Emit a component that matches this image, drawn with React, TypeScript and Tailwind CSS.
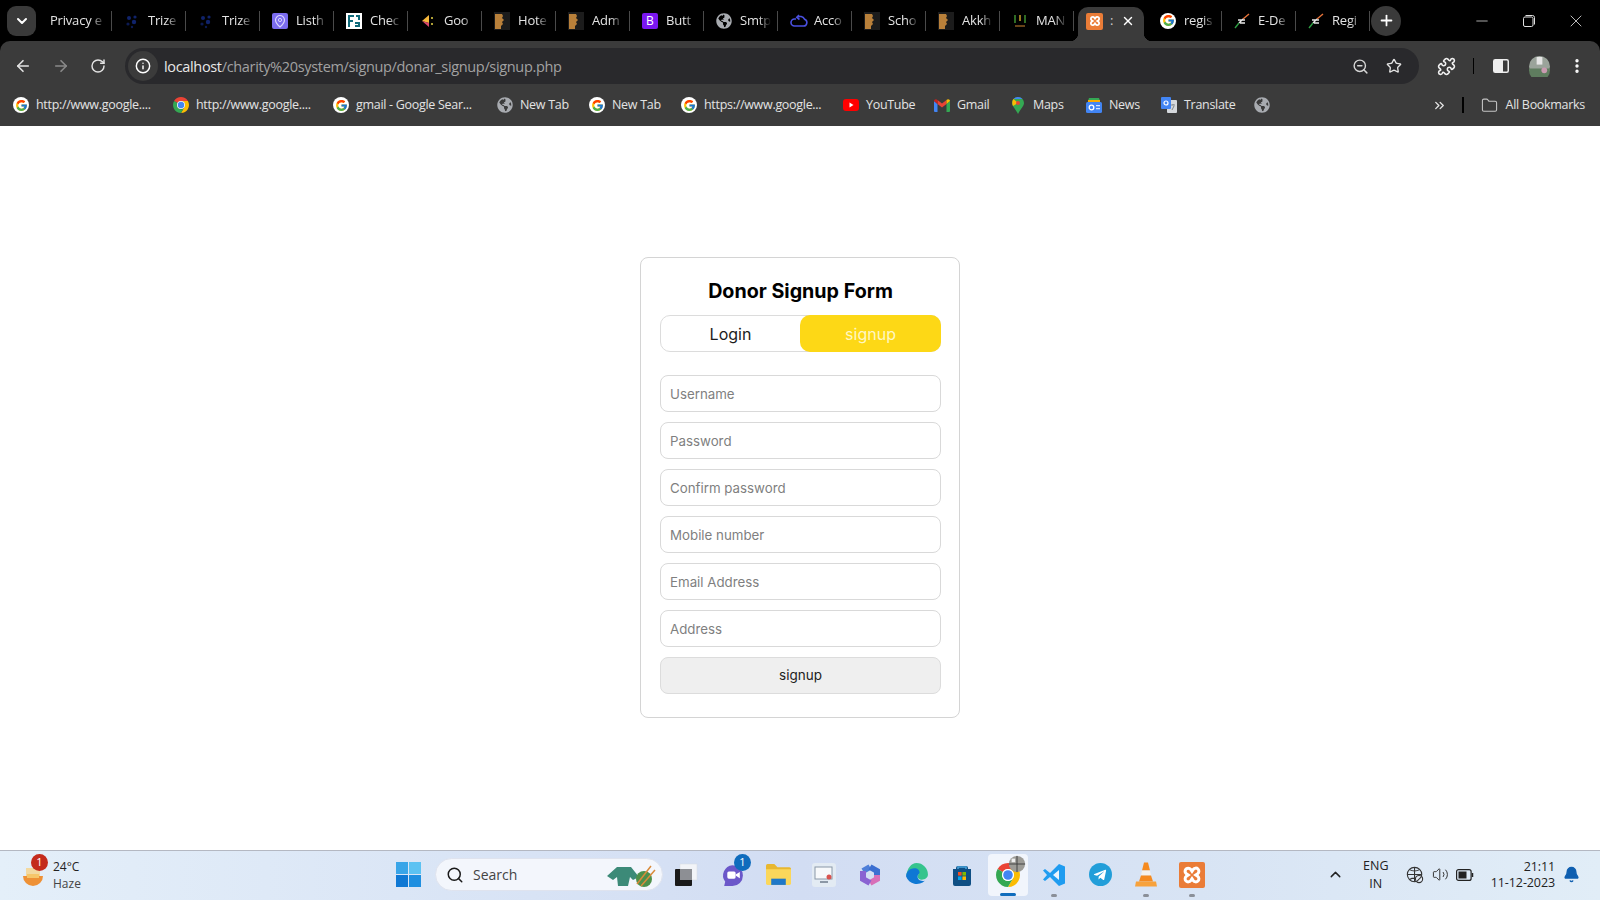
import type { ReactNode } from "react";
import {
  ArrowLeft,
  ArrowRight,
  Bell,
  ChevronDown,
  ChevronUp,
  ChevronsRight,
  EllipsisVertical,
  Folder,
  Info,
  Minus,
  Plus,
  Puzzle,
  RotateCw,
  Search,
  Star,
  Volume2,
  X,
  ZoomOut,
} from "lucide-react";
import { FcGoogle } from "react-icons/fc";
import { FaGlobeAmericas, FaTelegramPlane } from "react-icons/fa";

const Book = () => (
  <svg viewBox="0 0 16 18" className="h-[18px] w-[16px]">
    <rect width="16" height="18" fill="#1c1c1c" />
    <path d="M1 2h7l1 2-1 2 2 2-2 2 1 2-2 2 0 3H1z" fill="#b9803a" />
  </svg>
);

const TrizeIcon = () => (
  <svg viewBox="0 0 16 16" className="h-4 w-4">
    <circle cx="5" cy="5" r="2" fill="#10236b" />
    <circle cx="11" cy="4" r="1.6" fill="#10236b" />
    <circle cx="4" cy="11" r="1.6" fill="#0c1a52" />
    <circle cx="10" cy="9" r="2.2" fill="#10236b" />
    <circle cx="8" cy="14" r="1.2" fill="#0c1a52" />
  </svg>
);

const ListhIcon = () => (
  <svg viewBox="0 0 16 16" className="h-4 w-4">
    <rect width="16" height="16" rx="2" fill="#7b6cf0" />
    <path d="M8 2.5a4.5 4.5 0 0 0-4.5 4.5C3.500 10 8 14 8 14s4.500-4 4.500-7A4.500 4.500 0 0 0 8 2.500z" fill="none" stroke="#d9d4ff" strokeWidth="1.2" />
    <circle cx="8" cy="7" r="1.600" fill="none" stroke="#d9d4ff" />
  </svg>
);

const CheckIcon = () => (
  <svg viewBox="0 0 16 16" className="h-4 w-4">
    <rect width="16" height="16" fill="#fff" />
    <path d="M2 2h6v2H4v3h3v2H4v5H2zM10 2h4v5h-2V4h-2zM9 9h5v5H9v-2h3v-1H9z" fill="#0f6a7a" />
  </svg>
);

const GoodIcon = () => (
  <svg viewBox="0 0 16 16" className="h-4 w-4">
    <path d="M9 2 2 8l7 2z" fill="#f6b73c" />
    <path d="M2 8l7 6v-4z" fill="#d9466b" />
    <circle cx="12" cy="5" r="1" fill="#e8d548" />
    <circle cx="12" cy="11" r="1" fill="#e8d548" />
  </svg>
);

const BootstrapIcon = () => (
  <div className="flex h-4 w-4 items-center justify-center rounded-[2px] bg-[#7a16f0] text-[12px] leading-none text-white">B</div>
);

const CloudLoop = () => (
  <svg viewBox="0 0 18 16" className="h-4 w-[18px]" fill="none" stroke="#4a50e0" strokeWidth="1.600">
    <path d="M6 6H4.500a3.500 3.500 0 0 0 0 7h9a3.500 3.500 0 0 0 1-6.800A5 5 0 0 0 7 4.500" />
    <path d="M9 2 6.800 4.500 9.500 6.500" />
  </svg>
);

const ManIcon = () => (
  <svg viewBox="0 0 16 16" className="h-4 w-4" fill="none" strokeWidth="1.500">
    <path d="M3 2v8" stroke="#3f8f2f" />
    <path d="M8 2v6" stroke="#c9a227" />
    <path d="M13 2v8" stroke="#3f8f2f" />
    <path d="M3 13h10" stroke="#8a5a20" />
  </svg>
);

const Quill = () => (
  <svg viewBox="0 0 16 16" className="h-4 w-4" fill="none" strokeWidth="1.400">
    <path d="M15 1 9 6" stroke="#e8743a" />
    <path d="M9 6 5 10M4 7h7M6 10h5" stroke="#e8e8e8" />
    <path d="M5 10 1 15" stroke="#2f9e44" />
  </svg>
);

const Xampp = ({ box = "h-4 w-4", glyph = "h-3 w-3" }: { box?: string; glyph?: string }) => (
  <div className={`flex items-center justify-center rounded-[2px] bg-[#ea7c37] ${box}`}>
    <svg viewBox="0 0 16 16" className={glyph} fill="none" stroke="#fff" strokeWidth="2.400">
      <path d="M5 2.500a2.500 2.500 0 0 0-1.500 4.500L5 8l-1.500 1A2.500 2.500 0 1 0 7 12.500L8 11l1 1.500A2.500 2.500 0 1 0 12.500 9L11 8l1.500-1A2.500 2.500 0 1 0 9 3.500L8 5 7 3.500A2.500 2.500 0 0 0 5 2.500z" />
    </svg>
  </div>
);

const Chrome = ({ size = "h-4 w-4" }: { size?: string }) => (
  <svg viewBox="4 4 40 40" className={size}>
    <path d="M6.680 14A20 20 0 0 1 41.320 14H24A10 10 0 0 0 15.340 19Z" fill="#ea4335" />
    <path d="M41.320 14A20 20 0 0 1 24 44L32.660 29A10 10 0 0 0 24 14Z" fill="#fbbc04" />
    <path d="M6.680 14A20 20 0 0 0 24 44L32.660 29A10 10 0 0 1 15.340 19Z" fill="#34a853" />
    <circle cx="24" cy="24" r="10" fill="#fff" />
    <circle cx="24" cy="24" r="8" fill="#4285f4" />
  </svg>
);

const Globe = () => <FaGlobeAmericas className="h-4 w-4 text-[#a8abb0]" />;
const G = () => (
  <div className="flex h-4 w-4 items-center justify-center rounded-full bg-white">
    <FcGoogle className="h-[13px] w-[13px]" />
  </div>
);

const Youtube = () => (
  <svg viewBox="0 0 16 12" className="h-3 w-4">
    <rect width="16" height="12" rx="3" fill="#f00" />
    <path d="M6.500 3.500v5l4-2.500z" fill="#fff" />
  </svg>
);

const Gmail = () => (
  <svg viewBox="0 0 16 13" className="h-[13px] w-4">
    <path d="M0 2v10a1 1 0 0 0 1 1h2.500V5z" fill="#4285f4" />
    <path d="M16 2v10a1 1 0 0 1-1 1h-2.500V5z" fill="#34a853" />
    <path d="M12.500 1 8 4.500 3.500 1v4L8 8.500 12.500 5z" fill="#ea4335" />
    <path d="M0 2c0-1.500 2-2.500 3.500-1v4L0 2z" fill="#c5221f" />
    <path d="M16 2c0-1.500-2-2.500-3.500-1v4L16 2z" fill="#fbbc04" />
  </svg>
);

const MapsPin = () => (
  <svg viewBox="0 0 12 17" className="h-[17px] w-3">
    <path d="M6 0a6 6 0 0 1 6 6c0 3-3 5-6 11C3 11 0 9 0 6a6 6 0 0 1 6-6z" fill="#34a853" />
    <path d="M1.500 2 6 6 1 9C0 7-.2 4 1.500 2z" fill="#fbbc04" />
    <path d="M6 0a6 6 0 0 1 4.500 2L1.500 2A6 6 0 0 1 6 0z" fill="#4285f4" />
    <circle cx="6" cy="6" r="2" fill="#ea4335" />
  </svg>
);

const NewsIcon = () => (
  <svg viewBox="0 0 16 16" className="h-4 w-4">
    <path d="M2 4l1-3h10l1 3z" fill="#34a853" />
    <path d="M2 3h12v2H2z" fill="#f9ab00" />
    <rect y="5" width="16" height="11" rx="1.500" fill="#4285f4" />
    <path d="M10 8h4v1.300h-4zM10 11h4v1.300h-4z" fill="#d2e3fc" />
    <circle cx="5.500" cy="10.500" r="2.300" fill="none" stroke="#fff" strokeWidth="1.300" />
  </svg>
);

const TranslateIcon = () => (
  <svg viewBox="0 0 16 16" className="h-4 w-4">
    <rect x="6" y="3" width="10" height="13" rx="1" fill="#d5d8dc" />
    <rect width="10" height="12" rx="1" fill="#4285f4" />
    <circle cx="5" cy="6" r="2" fill="none" stroke="#fff" strokeWidth="1.200" />
    <path d="M10 8h4M12 7v1M11 13l2-4" stroke="#80868b" strokeWidth="1" />
  </svg>
);

const Divider = () => <div className="absolute right-0 top-[11px] h-[20px] w-[1.500px] bg-[#4a4a4a]" />;

const Tab = ({ icon, title }: { icon?: ReactNode; title: string }) => (
  <div className="relative flex h-[41px] w-[74px] shrink-0 items-center pl-[12px]">
    <div className="flex w-[24px] shrink-0 items-center">{icon}</div>
    <span className="w-[31px] overflow-hidden whitespace-nowrap text-[13px] tracking-[-0.2px] text-[#e3e3e3] [mask-image:linear-gradient(to_right,black_60%,transparent)]">
      {title}
    </span>
    <Divider />
  </div>
);

const tabs: { title: string; icon: ReactNode }[] = [
  { title: "Trize", icon: <TrizeIcon /> },
  { title: "Trize", icon: <TrizeIcon /> },
  { title: "Listh", icon: <ListhIcon /> },
  { title: "Chec", icon: <CheckIcon /> },
  { title: "Goo", icon: <GoodIcon /> },
  { title: "Hote", icon: <Book /> },
  { title: "Adm", icon: <Book /> },
  { title: "Butt", icon: <BootstrapIcon /> },
  { title: "Smtp", icon: <Globe /> },
  { title: "Acco", icon: <CloudLoop /> },
  { title: "Scho", icon: <Book /> },
  { title: "Akkh", icon: <Book /> },
  { title: "MAN", icon: <ManIcon /> },
];

const bookmarks = [
  { label: "http://www.google....", icon: <G />, gap: "mr-[21px]", text: "w-[116px]" },
  { label: "http://www.google....", icon: <Chrome />, gap: "mr-[21px]", text: "w-[116px]" },
  { label: "gmail - Google Sear...", icon: <G />, gap: "mr-[21px]", text: "w-[120px]" },
  { label: "New Tab", icon: <Globe />, gap: "mr-[21px]", text: "w-[48px]" },
  { label: "New Tab", icon: <G />, gap: "mr-[21px]", text: "w-[48px]" },
  { label: "https://www.google...", icon: <G />, gap: "mr-[22px]", text: "w-[117px]" },
  { label: "YouTube", icon: <Youtube />, gap: "mr-[20px]", text: "w-[48px]" },
  { label: "Gmail", icon: <Gmail />, gap: "mr-[21px]", text: "w-[32px]" },
  { label: "Maps", icon: <MapsPin />, gap: "mr-[23px]", text: "w-[30px]" },
  { label: "News", icon: <NewsIcon />, gap: "mr-[21px]", text: "w-[31px]" },
  { label: "Translate", icon: <TranslateIcon />, gap: "mr-[22px]", text: "w-[48px]" },
];

const TabStrip = () => (
  <div className="flex h-[41px] items-center bg-black pl-[7px]">
    <div className="mr-[2px] flex h-[30px] w-[29px] shrink-0 items-center justify-center rounded-[9px] bg-[#3a3a3a]">
      <ChevronDown className="h-4 w-4 text-white" strokeWidth={3} />
    </div>
    <div className="relative flex h-[41px] w-[74px] shrink-0 items-center pl-[12px]">
      <span className="w-[56px] overflow-hidden whitespace-nowrap text-[13px] tracking-[-0.2px] text-[#e3e3e3] [mask-image:linear-gradient(to_right,black_72%,transparent)]">
        Privacy e
      </span>
      <Divider />
    </div>
    {tabs.map((tab, i) => (
      <Tab key={i} icon={tab.icon} title={tab.title} />
    ))}
    <div className="relative mx-[4px] mt-[7px] flex h-[34px] w-[66px] shrink-0 items-center rounded-t-[10px] bg-[#3b3b3b] pb-[6px] pl-[8px]">
      <div className="absolute -left-[8px] bottom-0 h-2 w-2 bg-[radial-gradient(circle_at_0_0,#000_8px,#3b3b3b_8.5px)]" />
      <Xampp box="h-[17px] w-[17px]" />
      <span className="ml-[7px] text-[13px] text-[#d0d0d0]">:</span>
      <X className="ml-[8px] h-[14px] w-[14px] text-white" strokeWidth={2.5} />
      <div className="absolute -right-[8px] bottom-0 h-2 w-2 bg-[radial-gradient(circle_at_100%_0,#000_8px,#3b3b3b_8.5px)]" />
    </div>
    <Tab icon={<G />} title="regis" />
    <Tab icon={<Quill />} title="E-De" />
    <Tab icon={<Quill />} title="Regi" />
    <div className="ml-px flex h-[30px] w-[30px] shrink-0 items-center justify-center rounded-full bg-[#3a3a3a]">
      <Plus className="h-[17px] w-[17px] text-white" strokeWidth={2.5} />
    </div>
    <div className="ml-auto flex items-center pr-[1px]">
      <div className="flex w-[47px] justify-center">
        <Minus className="h-[18px] w-[18px] text-[#e0e0e0]" strokeWidth={1} />
      </div>
      <div className="flex w-[47px] justify-center">
        <svg viewBox="0 0 12 12" className="h-[12px] w-[12px]" fill="none" stroke="#e0e0e0">
          <rect x="0.500" y="2" width="9.500" height="9.500" rx="1.500" />
          <path d="M2.500 .500h7a2 2 0 0 1 2 2v7" />
        </svg>
      </div>
      <div className="flex w-[47px] justify-center">
        <X className="h-[20px] w-[20px] text-[#e0e0e0]" strokeWidth={1} />
      </div>
    </div>
  </div>
);

const Toolbar = () => (
  <div className="flex h-[43px] items-center rounded-t-[10px] bg-[#3b3b3b] pt-[7px]">
    <div className="flex w-[125px] shrink-0 items-center pl-[14px]">
      <ArrowLeft className="h-[18px] w-[18px] text-[#e3e3e3]" strokeWidth={2.2} />
      <ArrowRight className="ml-[20px] h-[18px] w-[18px] text-[#8a8a8a]" strokeWidth={2.2} />
      <RotateCw className="ml-[20px] h-[16px] w-[16px] text-[#e3e3e3]" strokeWidth={2.2} />
    </div>
    <div className="flex h-[36px] w-[1294px] shrink-0 items-center rounded-full bg-[#29292c] pl-[3px] pr-[17px]">
      <div className="flex h-[30px] w-[30px] items-center justify-center rounded-full bg-[#3b3b3b]">
        <Info className="h-[16px] w-[16px] text-white" strokeWidth={2.2} />
      </div>
      <div className="ml-[6px] whitespace-nowrap pt-[1px] font-['Open_Sans',sans-serif] text-[14.500px] tracking-[-0.34px] text-[#a2a2a2]">
        <span className="text-[#e8e8e8]">localhost</span>/charity%20system/signup/donar_signup/signup.php
      </div>
      <ZoomOut className="ml-auto h-[17px] w-[17px] text-[#d5d5d5]" strokeWidth={2} />
      <Star className="ml-[17px] h-[16px] w-[16px] text-[#e3e3e3]" strokeWidth={2} />
    </div>
    <div className="flex flex-1 items-center pl-[18px]">
      <Puzzle className="h-[19px] w-[19px] text-[#f0f0f0]" strokeWidth={2} />
      <div className="ml-[17px] h-[16px] w-px bg-black" />
      <svg viewBox="0 0 16 14" className="ml-[19px] h-[14px] w-[16px]">
        <rect x="0.750" y="0.750" width="14.500" height="12.500" rx="1.500" fill="none" stroke="#eee" strokeWidth="1.500" />
        <rect x="1" y="1" width="9" height="12" fill="#eee" />
      </svg>
      <svg viewBox="0 0 22 22" className="ml-[20px] h-[21px] w-[21px]">
        <circle cx="11" cy="11" r="11" fill="#9aa39a" />
        <path d="M0 13h22v2a11 11 0 0 1-22 0z" fill="#5f7d5f" />
        <rect x="8" y="1" width="6" height="8" fill="#e6e6e6" />
        <circle cx="16" cy="15" r="3" fill="#c99ab0" />
      </svg>
      <EllipsisVertical className="ml-[18px] h-[18px] w-[18px] text-white" strokeWidth={2.5} />
    </div>
  </div>
);

const BookmarksBar = () => (
  <div className="flex h-[42px] items-center bg-[#3b3b3b] pl-[13px] font-['Open_Sans',sans-serif]">
    {bookmarks.map((b, i) => (
      <div key={i} className={`flex items-center ${b.gap}`}>
        <div className="flex w-[16px] shrink-0 justify-center">{b.icon}</div>
        <span className={`ml-[7px] whitespace-nowrap text-[12.5px] tracking-[-0.3px] text-[#e3e3e3] ${b.text}`}>{b.label}</span>
      </div>
    ))}
    <Globe />
    <div className="ml-auto flex items-center pr-[15px]">
      <ChevronsRight className="h-[15px] w-[15px] text-[#e3e3e3]" strokeWidth={2.2} />
      <div className="ml-[15px] h-[16px] w-[2px] bg-black" />
      <Folder className="ml-[17px] h-[17px] w-[17px] text-[#c5c5c5]" strokeWidth={1.5} />
      <span className="ml-[8px] whitespace-nowrap text-[12.5px] tracking-[-0.3px] text-[#e3e3e3]">All Bookmarks</span>
    </div>
  </div>
);

const inputClass =
  "block h-[37px] w-full rounded-[8px] border border-[#d9d9d9] bg-white px-[9px] text-[13.300px] text-black outline-none placeholder:text-[#7f7f7f]";

const SignupCard = () => (
  <div className="w-[320px] rounded-[8px] border border-[#d4d4d4] bg-white pb-[23px] pl-[19px] pr-[18px] pt-[19px] font-['Inter',sans-serif]">
    <h1 className="text-center text-[19.700px] font-bold leading-[28px] text-black">Donor Signup Form</h1>
    <div className="mt-[10px] flex h-[37px] rounded-[10px] border border-[#dcdcdc]">
      <button className="flex-1 text-center text-[16px] text-[#1c1c1c]">Login</button>
      <button className="-my-px -mr-px w-[141px] rounded-[10px] bg-[#fdd816] text-center text-[16px] text-[#fff7c2]">signup</button>
    </div>
    <form className="mt-[23px] flex flex-col gap-[10px]">
      <input className={inputClass} placeholder="Username" />
      <input className={inputClass} placeholder="Password" />
      <input className={inputClass} placeholder="Confirm password" />
      <input className={inputClass} placeholder="Mobile number" />
      <input className={inputClass} placeholder="Email Address" />
      <input className={inputClass} placeholder="Address" />
      <button type="button" className="h-[37px] rounded-[8px] border border-[#dcdcdc] bg-[#efefef] text-[13.500px] text-[#222]">
        signup
      </button>
    </form>
  </div>
);

const Slot = ({ children, dot }: { children: ReactNode; dot?: boolean }) => (
  <div className="relative flex h-[50px] w-[46px] shrink-0 items-center justify-center">
    {children}
    {dot ? <div className="absolute bottom-[3px] h-[3px] w-[6px] rounded-full bg-[#8a8f98]" /> : null}
  </div>
);

const Taskbar = () => (
  <div className="flex h-[50px] items-center border-t border-[#b4b8c2] bg-[linear-gradient(90deg,#e4eff9,#dbe6f6_25%,#d2ddf3_50%,#d8e4f4_75%,#e1edf7)] pb-[2px] font-['Open_Sans',sans-serif]">
    <div className="relative ml-[20px] flex w-[365px] shrink-0 items-center">
      <svg viewBox="0 0 26 26" className="h-[26px] w-[26px]">
        <path d="M6 6h14v8H6z" fill="#f3d9a0" />
        <path d="M3 14h20a10 10 0 0 1-20 0z" fill="#ee9136" />
        <path d="M7 12h12v4H7z" fill="#f6c66a" />
      </svg>
      <div className="absolute left-[11px] top-[-4px] flex h-[17px] w-[17px] items-center justify-center rounded-full bg-[#c42b1c] text-[11px] text-white">1</div>
      <div className="ml-[7px] text-[12px] leading-[17px] text-[#222]">
        <div>24°C</div>
        <div className="text-[#444]">Haze</div>
      </div>
    </div>
    <Slot>
      <svg viewBox="0 0 24 24" className="h-[25px] w-[25px]">
        <path d="M0 0h11.500v11.500H0z" fill="#39a5e8" />
        <path d="M12.500 0H24v11.500H12.500z" fill="#5cc2f2" />
        <path d="M0 12.500h11.500V24H0z" fill="#0f78d4" />
        <path d="M12.500 12.500H24V24H12.500z" fill="#1f8fe0" />
      </svg>
    </Slot>
    <div className="ml-[4px] flex h-[33px] w-[228px] shrink-0 items-center rounded-full border border-[#dfe3ee] bg-[#f3f6fc] pl-[10px]">
      <Search className="h-[18px] w-[18px] text-[#1a1a1a]" strokeWidth={2} />
      <span className="ml-[9px] text-[14px] text-[#444]">Search</span>
      <svg viewBox="0 0 52 26" className="ml-[88px] h-[26px] w-[52px]">
        <path d="M2 14 12 5h14l8 10-6 3-3-3-2 9H13l-1-9-4 3z" fill="#3c8a78" />
        <circle cx="39" cy="17" r="8" fill="#4d8f4a" />
        <path d="M32 22 46 4M36 24 50 8" stroke="#d98a3a" strokeWidth="1.500" />
      </svg>
    </div>
    <Slot>
      <svg viewBox="0 0 24 24" className="h-[24px] w-[24px]">
        <rect x="6" y="1" width="17" height="16" fill="#f2f4f8" stroke="#d6d9e0" strokeWidth="0.500" />
        <rect x="1" y="6" width="17" height="17" rx="1" fill="#1a1a1a" />
        <rect x="6" y="6" width="12" height="11" fill="#8d8f94" />
      </svg>
    </Slot>
    <Slot>
      <svg viewBox="0 0 24 24" className="h-[25px] w-[25px]">
        <path d="M12 3a10 10 0 0 1 0 20H4l1-4a10 10 0 0 1 7-16z" fill="#6b57c9" />
        <rect x="7" y="9" width="8" height="7" rx="1.500" fill="#fff" />
        <path d="m15 12 4-2.500v6L15 13z" fill="#fff" />
      </svg>
      <div className="absolute right-[4px] top-[4px] flex h-[17px] w-[17px] items-center justify-center rounded-full bg-[#0f6cbd] text-[11px] text-white">1</div>
    </Slot>
    <Slot>
      <svg viewBox="0 0 24 20" className="h-[21px] w-[25px]">
        <path d="M0 1.500A1.500 1.500 0 0 1 1.500 0H8l3 3h11.500A1.500 1.500 0 0 1 24 4.500V7H0z" fill="#e8b730" />
        <path d="M0 5h24v13.500a1.500 1.500 0 0 1-1.500 1.500h-21A1.500 1.500 0 0 1 0 18.500z" fill="#fbd75b" />
        <path d="M5 14h14v6H5z" fill="#1f78c8" />
      </svg>
    </Slot>
    <Slot>
      <div className="flex h-[24px] w-[24px] items-center justify-center rounded-[3px] bg-[#e3ebf3]">
        <svg viewBox="0 0 20 18" className="h-[18px] w-[20px]">
          <rect x="1" y="1" width="17" height="12" fill="#f7f9fb" stroke="#8a98a8" />
          <path d="M6 16h8" stroke="#6f7d8c" strokeWidth="1.500" />
          <circle cx="15" cy="11" r="2.500" fill="#d9534f" />
        </svg>
      </div>
    </Slot>
    <Slot>
      <svg viewBox="0 0 24 24" className="h-[24px] w-[24px]" fill="none" strokeWidth="6">
        <path d="M5 8 12 4" stroke="#4f7fd8" />
        <path d="M12 4 19 8v4" stroke="#3b6fd1" />
        <path d="M19 12v4l-7 4" stroke="#d86fb8" />
        <path d="M12 20 5 16V8" stroke="#8a63d2" />
      </svg>
    </Slot>
    <Slot>
      <svg viewBox="0 0 24 24" className="h-[25px] w-[25px]">
        <path d="M12 1a11 11 0 0 1 11 11c0 3-3 5-6 5-2 0-4-1-4-3 0-1 1-2 1-3 0-2-2-3-4-3-4 0-7 3-8 6C3 6 7 1 12 1z" fill="#35c48d" />
        <path d="M2 14c0-4 3-8 8-8 3 0 5 2 5 4 0 1-2 2-2 4 0 3 3 5 7 4a11 11 0 0 1-18-4z" fill="#0f78d4" />
      </svg>
    </Slot>
    <Slot>
      <svg viewBox="0 0 24 24" className="h-[24px] w-[24px]">
        <path d="M6 5a2 2 0 0 1 2-2h8a2 2 0 0 1 2 2v1h3v15a2 2 0 0 1-2 2H5a2 2 0 0 1-2-2V6h3z" fill="#0f4f84" />
        <path d="M8 6V4h8v2" fill="none" stroke="#4aa5dc" strokeWidth="1.500" />
        <rect x="8" y="9" width="3.600" height="3.600" fill="#f25022" />
        <rect x="12.400" y="9" width="3.600" height="3.600" fill="#7fba00" />
        <rect x="8" y="13.400" width="3.600" height="3.600" fill="#00a4ef" />
        <rect x="12.400" y="13.400" width="3.600" height="3.600" fill="#ffb900" />
      </svg>
    </Slot>
    <div className="relative mx-[3px] flex h-[42px] w-[40px] shrink-0 items-center justify-center rounded-[4px] bg-[#f1f5fc]">
      <Chrome size="h-[24px] w-[24px]" />
      <svg viewBox="0 0 20 20" className="absolute right-[2px] top-[1px] h-[18px] w-[18px]">
        <circle cx="10" cy="10" r="9" fill="#9c9b96" />
        <path d="M1 10h18M10 1v18" stroke="#3c3c3c" strokeWidth="1" />
        <rect x="4" y="4" width="4" height="4" fill="#eee" />
      </svg>
      <div className="absolute bottom-0 h-[3px] w-[16px] rounded-full bg-[#0f6cbd]" />
    </div>
    <Slot dot>
      <svg viewBox="0 0 24 24" className="h-[24px] w-[24px]">
        <path d="M17 1 8 10 3 6 1 7.500 5 12l-4 4.500L3 18l5-4 9 9 6-2.500v-17z" fill="#1f9cf0" />
        <path d="M17 7v10l-6-5z" fill="#eaf4fd" />
      </svg>
    </Slot>
    <Slot>
      <div className="flex h-[23px] w-[23px] items-center justify-center rounded-full bg-[#229ed9]">
        <FaTelegramPlane className="h-[14px] w-[14px] text-white" />
      </div>
    </Slot>
    <Slot dot>
      <svg viewBox="0 0 24 26" className="h-[27px] w-[24px]">
        <path d="M10 1h4l2 8H8z" fill="#f58a1f" />
        <path d="M8 9h8l1 5H7z" fill="#f4f1ec" />
        <path d="M7 14h10l2 6H5z" fill="#f58a1f" />
        <path d="M2 20h20l1 5H1z" fill="#f7a23c" />
      </svg>
    </Slot>
    <Slot dot>
      <Xampp box="h-[26px] w-[26px]" glyph="h-[20px] w-[20px]" />
    </Slot>
    <div className="ml-auto flex items-center">
      <ChevronUp className="h-[17px] w-[17px] text-[#222]" strokeWidth={2} />
      <div className="ml-[16px] w-[32px] text-center text-[12.500px] leading-[18px] text-[#222]">
        <div>ENG</div>
        <div>IN</div>
      </div>
      <svg viewBox="0 0 20 20" className="ml-[14px] h-[18px] w-[18px]" fill="none" stroke="#333" strokeWidth="1.200">
        <circle cx="9.500" cy="9.500" r="8" />
        <path d="M1.500 9.500h16M9.500 1.500v16M4 4c3 2 8 2 11 0M4 15c3-2 8-2 11 0" />
        <circle cx="14.500" cy="14.500" r="4" fill="#e6edf7" />
        <path d="m12 17 5-5" />
      </svg>
      <Volume2 className="ml-[8px] h-[17px] w-[17px] text-[#333]" strokeWidth={1.4} />
      <svg viewBox="0 0 18 12" className="ml-[7px] h-[12px] w-[18px]" fill="none">
        <rect x="0.600" y="0.600" width="14.500" height="10.800" rx="2" stroke="#222" strokeWidth="1.200" />
        <rect x="2.500" y="2.500" width="8" height="7" fill="#222" />
        <path d="M16.500 4v4" stroke="#222" strokeWidth="1.500" />
      </svg>
      <div className="ml-[17px] text-right text-[12.500px] leading-[16px] tracking-[-0.1px] text-[#222]">
        <div>21:11</div>
        <div>11-12-2023</div>
      </div>
      <Bell className="ml-[8px] mr-[20px] h-[17px] w-[17px] fill-[#0f5fb0] text-[#0f5fb0]" strokeWidth={2} />
    </div>
  </div>
);

export default function App() {
  return (
    <div className="flex h-screen flex-col overflow-hidden bg-white">
      <div className="bg-black font-['Open_Sans',sans-serif]">
        <TabStrip />
        <Toolbar />
      </div>
      <BookmarksBar />
      <main className="flex flex-1 items-center justify-center bg-white pb-px">
        <SignupCard />
      </main>
      <Taskbar />
    </div>
  );
}
